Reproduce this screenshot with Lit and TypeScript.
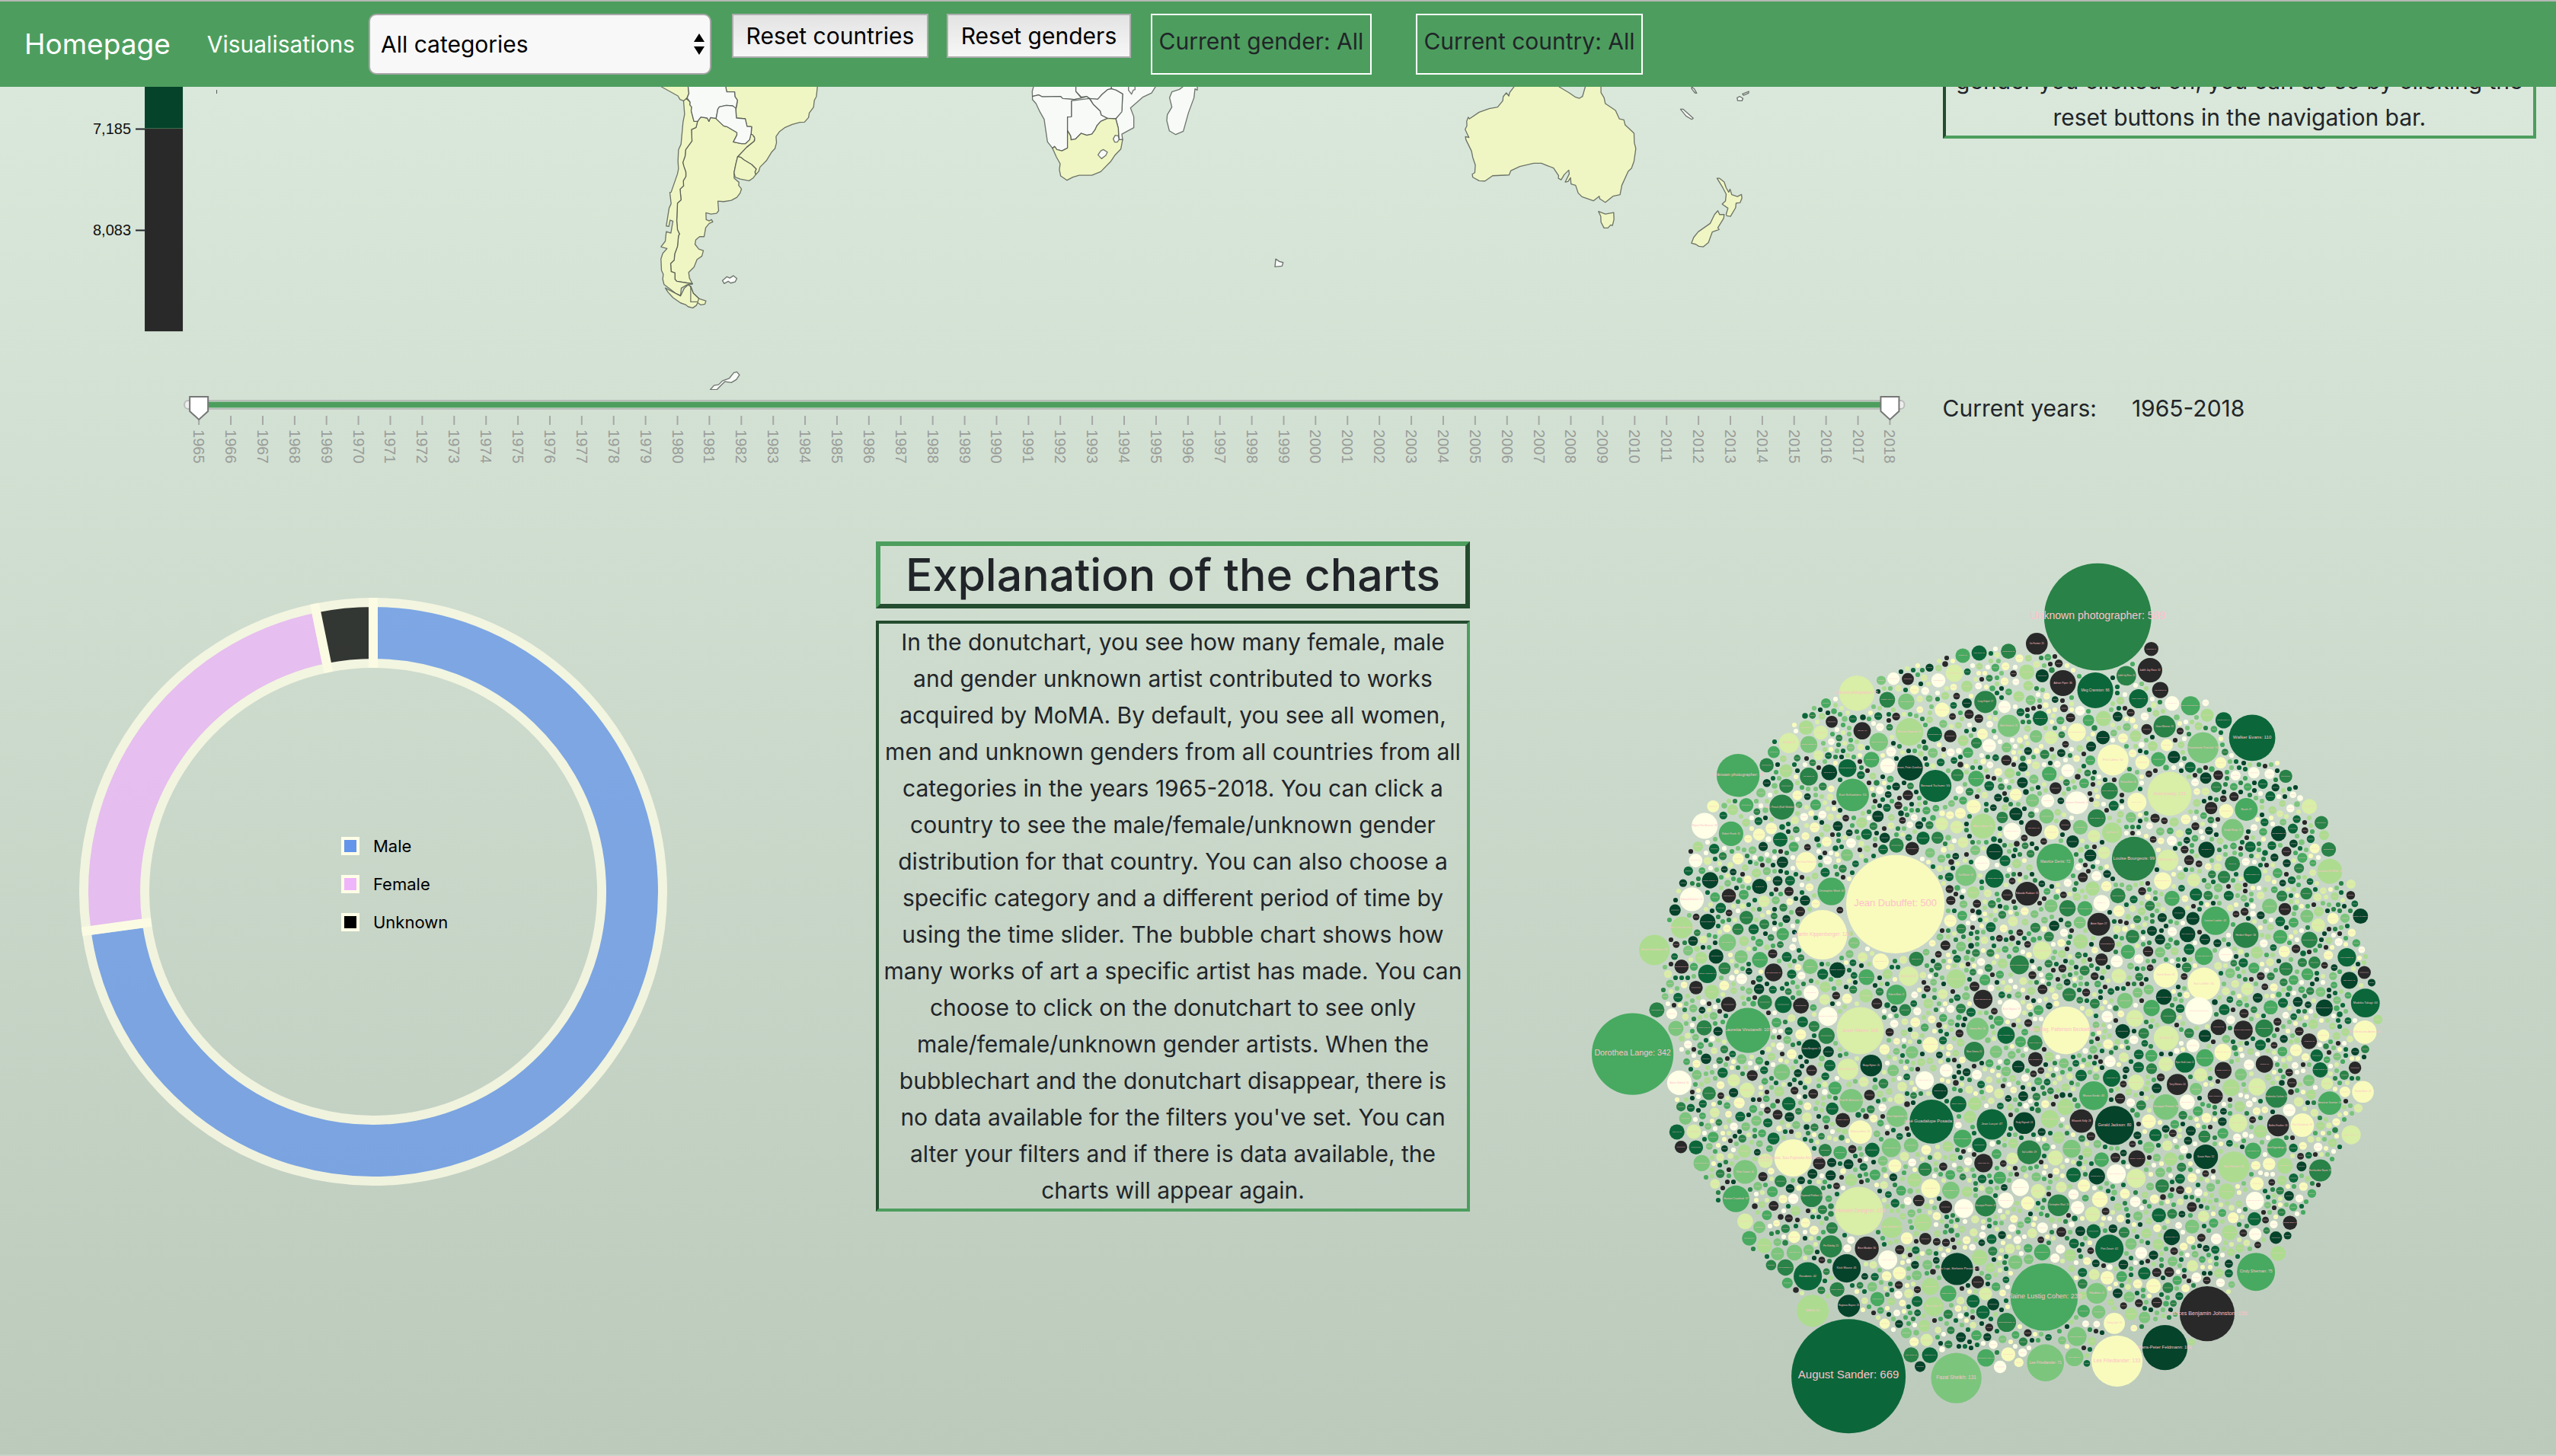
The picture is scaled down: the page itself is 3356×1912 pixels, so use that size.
import { LitElement, html, svg, css } from "lit";
import { customElement, state } from "lit/decorators.js";

const SCALE = ["#fffee6", "#f8fbbc", "#d9eea6", "#addc90", "#7cc57d", "#47aa60", "#298247", "#0b673a", "#05432b", "#292929"];

interface Bubble { x: number; y: number; r: number; c: number; label: string; }

/* The bubble canvas is stored in four tiles; every row is x, y, radius, colour index and optional label. */
const TILES: { ox: number; oy: number; ky: number; rows: string }[] = [
  { ox: 2060, oy: 720, ky: 2.613, rows: `
1200,1224,181,1,Jean Dubuffet: 500|932,1329,91,1,Martin Kippenberger: 128|622,782,79,5,Unknown photographer: 95|1058,500,65,2,Unknown photographer: 65|1043,849,60,5,Kurt Schwitters: 55|1347,818,59,7,Bernard Tschumi: 55|314,1381,56,3,Bruce Davidson: 48|1252,633,51,3,Brenton Hamed: 39|965,1180,51,5,Christopher Wool: 40|783,891,46,6,A. R. Penck (Ralf Winkler): 32|1254,756,47,8,Damson, Peter Zumthor: 34|499,955,48,0,Miguel Rio Branco: 36|596,982,45,5,Robert Frank: 31|452,1207,44,0,Edward Steichen: 31|415,1304,40,3,Henri Cartier-Bresson: 25|872,1080,38,1,West Grand Street: 22|809,671,37,2,Sam Vable: 21|1531,530,41,6,Craig Kalpul: 27|1522,956,46,3,Alison Saxton: 31|1078,629,32,9,Otto Dix: 16|1139,667,34,4,Bernd Lohaus: 18|1240,529,30,4,Arlene Gottfried: 15|1170,522,29,6,Richard Avery: 14|882,676,31,4,Richard Misrach: 15|882,786,33,6,Jim Shaw: 17|1024,757,33,7,Richard Bosman: 16|957,772,29,8,David Salle: 13|1459,1125,39,4,Karl Blaster: 23|582,1355,32,4,Roy Wood: 15|752,1458,33,9,Jan Tschichold: 16|509,1463,34,7,Stanley Tomkins: 17|1204,1534,37,5,Roberto Matta: 21|1249,1471,36,2,Anna Castelli: 20|1423,1480,35,3,Oliver Laric: 18|519,1142,30,8,Michael Schmidt: 14|510,1284,29,8,Giorgio Morandi: 13|987,1450,29,8,Eduardo Chillida: 13|701,1163,28,8,B. Beck: 12|702,1415,29,5,Richard Kelly: 13|1094,1474,29,5,Rogier van der: 13|1146,1421,30,1,Robert Rabin: 14|1277,1412,27,6,Bob Dylan: 11|1519,1083,28,0,Chris Burke: 12|1564,1136,34,7,Ornan Naum: 22|890,1528,28,0,Peter Bliss: 12|940,1551,20,2|1372,557,27,1|1358,456,26,0|1417,431,32,2|1448,371,27,5,Contarino: 11|1508,362,28,7,Mark Cohen: 12|1172,749,28,0|1112,728,29,5|1204,1022,27,6|1262,1033,25,9,Felix Gonzalez: 9|1302,997,24,7|1355,996,22,6|1161,996,19,8|1094,984,20,7|1076,944,20,3|1136,922,21,8|1022,1055,22,4|777,1002,27,7,Aquaman Dustrin: 12|785,1080,21,8|744,964,21,1|699,985,22,1|652,884,26,5|602,900,20,3|530,888,22,1|753,702,22,5|727,747,26,6|872,618,27,3|926,635,26,2|966,598,22,9|945,534,18,5|1148,456,17,4|1193,450,23,0|1246,451,22,9|1344,641,28,7,Sonia Delaunay: 12|1402,647,23,9|1497,793,29,5,Arne Jacobsen: 12|1545,680,25,0|1428,781,23,6|1488,889,26,1|1439,912,20,1|1370,948,24,2|1426,959,24,2|1449,1012,20,2|1463,534,18,8|1471,572,17,9|1507,587,16,9|1463,476,21,3|1270,488,17,1|1449,663,20,3|1467,704,19,5|1498,671,20,6|799,818,26,6|798,766,24,3|840,850,18,1|907,883,20,5|706,842,17,4|534,1034,19,7|474,1026,19,3|466,1074,25,0,Jim Seaweed: 10|439,1110,17,7|622,1068,21,1|714,1026,17,8|588,1195,26,9,Hans Namuth: 10|390,1244,21,8|558,1237,19,7|652,1270,25,6|621,1310,21,6|679,1310,19,7|537,1200,18,5|456,1350,18,8|541,1403,27,8,Agnes Denes: 10|633,1404,24,4|414,1438,26,9,Josef Breitenbach: 11|572,1444,22,6|486,1408,22,3|467,1510,25,9|525,1525,27,3,Stefanus: 11|635,1480,20,0|699,1515,19,8|571,1503,18,1|749,1394,17,9|786,1327,23,5|850,1249,18,9|868,1211,19,8|809,1180,17,9|717,1214,21,2|689,1117,17,3|887,1438,28,4,Constant: 11|933,1464,20,7|819,1464,17,7|942,1115,17,7|907,1222,16,1|942,1508,20,3|1048,1357,21,4|1402,1281,23,1|1404,1211,17,9|1446,1263,18,5|1500,1222,15,9|1486,1184,23,3|1398,1130,16,7|1529,1484,20,5|1491,1506,18,9|1522,1550,35,9,Saul Steinberg: 20|1565,1044,30,8|1092,1538,25,3|1037,1014,18,0|951,1073,16,0|1155,1036,18,7|1246,850,19,9|1545,818,18,7|1442,1308,18,6|587,1568,28,9|720,1560,27,6|788,1568,31,7|853,1572,29,9|1132,1565,20,9|401,1544,17,7` },
  { ox: 2600, oy: 720, ky: 2.613, rows: `
432,238,197,6,Unknown photographer: 589|1000,653,85,7,Walker Evans: 110|696,845,81,2,Alvin Lustig: 101|565,1068,81,6,Louise Bourgeois: 99|276,1080,69,5,Maurice Denis: 72|423,490,66,7,Meg Cranston: 66|488,729,57,1,Phil Collins: 50|819,687,57,4,Rosemarie Trockel: 51|822,1497,60,1,Sol LeWitt: 56|865,1281,52,5,Louise Lawler: 41|1416,1563,53,7,Madoka Takagi: 44|1285,1111,46,3,Constance F. White: 32|976,1330,47,6,Herbert Bayer: 34|682,1468,45,1,Daniel Buren: 31|304,465,48,9,Adrian Piper: 36|624,421,45,9,Judith Joy Ross: 32|173,1188,44,9,Eduardo Paolozzi: 31|436,1293,42,9,Anton Stpan: 27|978,899,42,5,Raush: 27|928,970,41,4,Joseph Beuys: 25|60,1136,42,7,Ornan Noyo: 26|208,330,40,9,Iris Farmer: 25|678,614,41,6,Grace Moreno: 25|105,612,41,4,Mimi Schanck: 25|355,876,42,0,Giovanni Schiaretta: 26|690,1073,39,2,Walter Gropius: 22|485,978,37,3,Jack Kurtz: 21|537,440,36,6,Judith Joy Ross: 20|582,519,35,7,Marie Laurel: 19|773,543,35,5,Robert Mapplethorpe: 19|545,807,36,4,Richard Minor: 20|576,874,35,1,Willis Art: 19|428,929,33,6,Diane Barker: 17|475,835,31,6,Wendy Edwards: 15|355,634,33,1,Mira Sternisburg: 17|117,974,32,0,Lindor Morris: 17|196,963,31,9,Irma Wallen: 15|1001,1123,33,7,Jasha Tuszin: 17|671,1144,32,1,Nicholas Nixon: 16|822,1402,33,5,Aleksei Bruchuk: 17|1348,1406,34,7,Tina Modotti: 18|1357,1485,31,8,Brad Parker: 15|227,1383,34,2,Bernard Leach: 18|144,1432,35,6,Anselm Schwartzman: 19|662,489,30,9,Alba Guthrow: 15|629,348,26,9,Robert Blair: 11|104,356,28,6,Claudia Demo: 12|895,593,30,7,Richard Prince: 14|1123,785,24,6|1254,944,25,6|1281,1036,27,6|1210,889,28,2|1006,773,21,0|1097,981,28,8,John Baldessari: 12|832,1037,30,8,Per Millon: 14|927,1085,28,6,Ray-to: 12|904,904,26,1|849,894,23,9|829,791,21,8|875,781,18,9|655,727,27,5|712,719,23,8|596,737,26,1|634,681,18,3|686,678,22,1|525,654,18,1|451,652,25,8|571,647,21,3|612,624,20,9|505,580,18,8|453,587,28,3,Aaron Siskind: 12|398,593,21,5|367,560,18,0|332,584,17,9|221,586,28,7,Sarah Moon: 12|171,427,28,3|228,440,24,8|89,547,23,0|142,511,20,3|185,524,18,4|205,648,23,4|260,652,25,2|37,679,27,0|254,777,27,5,David Reed: 11|322,765,24,0|277,826,22,9|248,869,24,0|192,868,24,4|131,848,22,1|96,730,19,9|131,914,24,8|244,922,27,4|312,952,21,9|262,977,27,1|340,1009,23,8|368,960,27,4|418,990,23,2|455,1047,23,2|405,1057,22,8|51,1044,26,8,Jerry Sand: 11|91,1075,20,7|134,1085,17,3|81,926,21,6|99,1192,21,9|260,1230,24,4|321,1238,30,6,Edward Ruscha: 14|385,1239,28,5,Willem Gomez: 12|446,1220,30,0,Jim Dine: 14|413,1170,26,3|506,1195,28,6,Robin Forest: 12|510,1247,21,1|464,1162,19,1|366,1287,22,4|369,1352,27,3|466,1361,29,9,Leonard Baskin: 13|446,1414,23,9|502,1420,22,0|543,1387,26,5|560,1335,25,6|510,1470,27,2|583,1412,17,0|617,1386,19,9|661,1389,19,4|661,1345,19,8|706,1318,17,0|730,1254,24,8|782,1273,24,8|762,1327,29,8,Sheri Sherry: 13|826,1345,20,8|768,1379,20,7|903,1397,26,0|759,1441,18,6|705,1204,28,5,Alberto Giu: 12|793,1191,23,7|785,1141,24,2|838,1194,17,6|896,1131,23,6|875,1168,16,4|993,1027,20,7|1072,1023,16,7|1126,1043,18,9|1152,1016,15,8|1093,1117,18,5|1109,1196,20,6|1064,1231,28,4|1120,1241,23,9|1103,1283,18,7|1103,1336,26,5|1199,1187,22,6|1240,1200,15,2|1201,1265,24,4|1243,1296,25,2|1297,1273,21,1|1210,1346,30,6,Lynn Nyhychuk: 14|1398,1265,28,8,Quantum Von Sistas: 12|1362,1193,16,9|1363,1155,17,2|1412,1458,24,9|1439,1493,14,8|1124,1446,25,6|1118,1386,21,1|1161,1377,16,9|1017,1390,22,3|1006,1443,20,5|967,1425,17,7|1184,1424,17,6|1229,1424,22,6|1203,1464,22,5|1251,1525,18,4|982,1515,23,2|1152,1484,18,5|1020,1545,18,8|675,1542,29,8,Frank Westland: 13|327,1534,25,6|229,1516,18,9|17,1484,20,5|804,1590,50,0|532,1555,29,4|630,1580,30,5|1280,1399,17,1|1341,1272,17,4|272,1298,19,8|669,1270,17,8|713,942,17,3|662,974,15,4|643,929,17,9|554,926,19,4|868,822,20,6|933,855,17,9|932,821,14,5|884,739,21,1|834,575,24,3|705,535,27,0,Alice Eden: 11|772,754,20,7|790,806,14,0|735,630,13,9|640,680,18,3|8,640,20,1|237,710,17,6|298,705,15,8|157,753,17,8|155,807,20,8|108,774,19,3|382,809,18,5|345,828,17,8|405,730,18,5|197,795,17,4` },
  { ox: 2060, oy: 1310, ky: 2.605, rows: `
1028,1298,210,7,August Sander: 669|234,196,150,5,Dorothea Lange: 342|1424,1304,93,4,Fazal Sheikh: 131|658,115,83,5,Lauretta Vinciarelli: 107|1071,116,87,2,Josef Albers: 116|1066,733,89,2,Unknown Designer: 123|1333,427,81,7,José Guadalupe Posada: 99|824,551,69,1,Sou Fujimoto, Sou Fujimoto Architects: 73|896,1074,59,3,NASA: 52|1427,931,59,8,Giorgia Lupi, Stefanie Posavec: 54|1021,929,52,8,Kiick Mause: 41|878,956,52,7,Residents: 42|614,691,49,5,Hastan Crawford: 37|648,599,44,4,Peter Downs: 30|1095,861,44,9,Brice Marden: 30|1038,355,43,4,Fred W. McDarrah: 28|1071,463,43,1,Rebecca Horn: 28|1029,1057,41,8,Hagiwara Bayuro: 26|892,682,40,6,Raymond Pettibon: 24|963,854,41,6,Per Kirkeby: 25|406,294,45,0,Aaron Siskind: 31|1555,436,56,7,Jean Lurçat: 47|1502,110,41,4,Ximena Fair: 24|1111,235,40,8,Margo Hytner: 25|1206,409,39,4,Meret Oppenheim: 22|1025,248,39,2,Paul Graham: 22|1187,789,39,3,Isaac Lokshamin: 22|1532,715,39,6,Giuseppe Penone: 22|1490,188,37,6,Maria Ximena: 21|891,178,36,8,Louise Bourgeois: 20|952,67,35,0,Thomas Kaufmann: 18|1341,1060,36,3,Marcus Quinn: 20|1172,900,35,0,Hyena Hub: 18|1185,516,35,4,Philip Guston: 18|1524,569,34,9,Joan Miro: 18|1308,286,34,0,Matt Mangal: 17|1330,656,35,1,Gilbreath: 18|1452,724,35,0,Peter Barrios: 18|1533,1235,32,5,Giacometti Harris: 16|1404,662,32,4,Shelly Saporo: 16|1447,485,33,5,Richard McCaslin: 16|1301,772,32,3|783,258,30,4|947,133,30,6|323,45,28,6,Vitus Sebaste: 12|393,108,28,4|378,58,20,0|497,106,28,6,Michael Keller: 12|586,28,27,9,Karl Breiner: 11|720,18,27,6|788,27,31,7|854,35,29,9|515,330,25,6|606,286,23,2|655,319,28,2|674,269,20,9|565,260,19,7|626,363,20,1|536,396,18,2|428,416,23,4|397,462,28,7,Dave Gill: 12|459,461,27,2|412,514,23,9|467,515,26,7|530,480,20,5|488,569,30,4,Barbara Mensch: 14|556,605,16,6|537,640,18,2|645,528,24,3|722,561,27,2|752,485,22,7|689,424,19,4|731,431,17,7|650,444,16,4|808,366,25,7|811,411,18,8|892,252,20,9|898,332,18,9|978,312,24,5|968,383,23,7|1007,422,27,9,William Leavitt: 11|959,235,21,7|954,188,20,8|901,101,20,6|859,86,20,7|852,129,20,1|763,88,18,5|1105,336,20,9|1215,349,20,2|1225,307,18,2|1156,297,18,6|1192,252,21,4|1261,190,23,4|1329,164,29,1,Danielle Rhoads: 13|1387,252,24,0|1364,323,29,8,Madame Nini: 13|1431,367,30,7,Isabelle Corbin: 14|1492,366,25,3|1474,411,23,3|1509,507,27,7|1393,512,20,3|1258,508,27,4|1115,524,27,7|1042,521,15,9|997,533,25,5|942,525,24,6|920,570,23,9|966,567,17,8|962,611,19,8|1037,627,22,3|1125,609,20,5|1198,578,24,1|1270,627,26,3|1309,590,25,6|1402,609,18,5|1286,697,21,9|1385,719,24,9|1464,667,20,3|1519,623,16,7|1233,546,17,2|1199,706,16,7|1242,826,22,1|1310,828,22,9|1352,838,14,9|1352,750,15,1|1119,917,14,2|967,791,21,6|932,728,17,6|825,691,19,0|787,692,16,1|833,732,18,3|869,773,18,1|828,822,22,1|901,799,17,1|796,793,16,6|829,875,29,4,Karl Rainer: 12|881,866,19,4|767,879,24,4|796,926,30,6,Lee Friedlander: 14|743,918,19,6|803,979,20,5|718,851,28,3|663,826,27,5|648,768,29,2,David Wilson: 12|700,788,22,4|778,631,22,6|748,667,20,5|694,648,16,4|813,656,16,8|854,628,14,8|713,615,17,9|986,1001,27,6,Merlina Anderse: 11|928,1004,14,6|1134,1034,26,5|1115,992,18,4|1168,955,18,1|1215,945,24,1|1329,991,32,3|1281,1002,13,9|1394,1015,30,5,Shadai Kanker: 13|1280,1042,20,7|1249,1015,17,2|1211,1019,15,0|1306,1126,22,3|1240,1150,20,4|1315,1174,23,2|1269,1180,17,1|1161,1118,19,1|1258,1225,28,6,Gran Weaver: 12|1327,1226,29,7,Sarah Moon: 13|1291,1265,20,8|1486,1041,24,7|1522,1079,25,7|1532,1016,24,2|1503,976,23,9|1510,892,29,3|1394,1086,17,6|1404,1141,14,6|1498,1158,19,5|1216,865,17,9|1275,867,14,7|1519,12,36,9,Saul Steinberg: 20|1236,45,22,6|1132,26,20,9|1196,92,15,0|1160,180,19,1|1179,121,15,9|1204,0,37,5|470,267,18,4|412,376,17,6|1376,581,15,9|1560,1052,22,8|1037,832,14,0|1092,0,28,3|605,328,17,8|504,212,19,8|548,118,17,8|1441,40,18,6|1478,53,17,7|1515,300,14,7|1468,563,15,0|1554,829,18,7` },
  { ox: 2600, oy: 1310, ky: 2.605, rows: `
235,1027,124,5,Elaine Lustig Cohen: 235|834,1084,101,9,Frances Benjamin Johnston: 156|503,1246,94,1,Lee Friedlander: 133|679,1200,83,8,Hans-Peter Feldmann: 102|315,115,88,1,Alex Bag, Patterson Beckwith: 117|240,1252,68,4,Lee Friedlander: 71|494,440,72,8,Gerald Jackson: 80|1014,941,70,5,Cindy Sherman: 75|417,338,53,5,Masuo Ikeda: 43|475,862,52,7,Piet Zwart: 42|932,582,57,3,Raj Pinsoli: 49|804,62,49,0,Marcel Jean: 37|684,141,46,2,Jim Dow: 33|682,377,47,4,Giuseppe Penone: 33|829,547,45,8,Susan Hara: 32|180,532,44,6,Sol LeWitt: 29|372,425,43,9,Ellsworth Kelly: 28|162,432,40,8,Rudy Rigoudt: 24|288,713,40,6,Christopher Wool: 25|1184,439,43,1,Paul Goudzack: 28|1285,364,43,5,American Screetor: 28|1414,121,43,1,Helio Montezuma Atomica: 28|1407,325,40,1,Natalia Barin: 24|1250,594,41,6,Bernhardine Naum: 25|1089,342,40,6,Fredericka Carlson: 24|1095,440,40,9,Barbra Kruzkov: 24|725,300,39,9,Terry Winters: 24|493,1117,39,1,Danny Lyon: 24|428,1014,38,4,Philip Adams: 22|753,225,37,7,Eyon Verdi Lewis: 21|97,1114,35,6,Thios Nakomiak: 19|356,1162,35,4,Howard Kottler: 19|704,822,30,8,Blocked Ruby: 14|657,747,26,7|346,1233,33,4,Gary Burgs: 17|1364,472,35,2,Bruce Naugh: 19|967,114,35,9,Clarence Blackledge: 19|1044,108,33,6|876,104,29,9,Luis Peron: 12|1045,230,32,9,Wilfried: 16|115,42,36,0,Alexia Niagrous: 19|95,131,32,7,Dee McCarthy: 16|500,606,35,0,John Robinson: 18|573,621,35,2,Edward Ruben: 18|429,614,30,8,Richard Dube: 13|576,554,31,9,Camille Horvitz: 14|483,278,32,7,Angus Gold: 16|1091,517,36,5,Martin Kippenberger: 20|1003,527,30,5,Maki Sakjaku: 13|1010,698,33,0,Katharina Perez: 16|906,666,30,3|948,432,34,2,Georg Karsly: 17|922,311,31,3|1018,308,32,2|893,252,31,9,Yamako Flower: 14|864,340,28,9,Yoshio Honjorian: 12|793,316,23,4|761,360,28,0,Samuele Ennio: 12|810,267,25,2|826,209,32,5,Robert Trauner: 15|892,190,31,1,Catherine Opie: 14|682,230,27,2|629,45,31,5,Michael Blacker: 14|692,66,29,6|568,74,31,2|532,22,29,4|601,125,20,6|524,118,27,8|467,68,21,0|826,134,23,8|782,167,24,0|897,44,20,7|970,57,17,9|735,40,16,7|768,124,18,6|1068,36,26,5|1209,152,29,9,Arlit Bruyen: 13|1265,38,31,8,Hannah Thommay: 14|1261,132,22,1|1237,201,23,7|1250,250,28,7,Christin Sebesky: 12|1378,243,23,9|1338,268,17,6|1161,183,22,1|1111,187,18,5|1030,165,20,7|1146,294,18,9|1136,259,14,9|1208,286,21,4|1275,297,22,2|1171,359,18,2|1136,388,23,0|1341,325,20,1|1390,381,16,2|958,266,22,4|988,232,19,0|1462,78,17,3|1295,500,16,3|1242,514,16,0|1251,441,16,3|1151,517,16,7|1062,572,23,1|1120,578,29,3,Frank Hays: 12|1013,577,17,1|1109,628,18,3|1152,620,17,7|1017,639,25,1|1135,681,18,8|1188,649,16,1|1219,673,16,5|1139,773,26,9,Mirrisham Banker: 11|1087,824,23,8|1130,817,14,8|1095,878,28,3,Rob Warner: 12|1008,760,25,7|1011,812,23,0|930,756,20,1|917,806,28,3,Antonio Leone: 12|967,808,14,9|954,860,16,3|868,828,20,0|821,751,21,2|858,774,17,5|779,786,26,4|813,824,15,9|774,832,16,1|654,847,20,3|592,876,22,0|554,845,21,4|529,806,20,6|488,793,16,8|417,802,26,7|413,744,28,2|440,693,29,1,Alexandra Fletcher: 12|461,734,14,9|358,721,25,0|343,676,19,0|381,646,23,1|343,609,27,7|298,651,20,2|213,665,27,2|175,706,25,1|147,652,32,0,Slava Kumar: 16|94,696,29,0,Harrington Balk: 13|229,790,20,0|228,874,30,5,Kurt Schwitters: 14|331,884,22,3|295,863,17,0|275,894,17,0|176,860,16,5|178,898,18,4|129,908,26,4|46,870,17,6|37,829,20,7|37,927,18,3|55,1053,22,8|19,1017,24,2|14,1080,20,7|9,890,27,3|58,992,16,5|48,1190,16,0|103,1223,26,1|73,1266,23,0|158,1180,16,6|156,1217,16,0|142,1251,17,1|22,1235,31,5|130,1157,14,5|175,1150,14,9|118,553,22,2|72,619,23,5|60,538,18,5|276,551,28,2,Josef Sudek: 12|336,520,33,4,Wolfgang Wildrier: 16|288,482,22,3|256,418,33,3,Thomas Joachim: 16|313,377,30,3|206,616,17,4|201,157,28,6,Minor Weetjin: 12|203,214,27,9,Ellery Normandy: 11|140,239,23,8|58,188,23,4|95,255,18,4|148,154,20,5|254,205,18,3|477,221,21,0|371,269,21,7|573,293,29,2,Zoe Leonard: 12|582,241,20,7|630,246,20,6|629,202,22,5|583,197,18,7|514,348,19,9|553,362,16,0|565,147,16,0|620,426,26,1|644,473,23,7|620,515,21,4|688,509,19,2|700,555,25,3|708,467,14,9|682,452,14,8|715,436,16,5|745,405,16,6|749,522,15,0|740,583,17,6|662,601,18,4|669,647,25,6|735,661,15,9|779,619,17,1|847,652,16,4|570,701,20,0|641,692,17,1|580,750,17,4|446,557,27,5|497,550,18,9|407,477,16,9|467,961,25,1|419,950,20,2|526,916,18,8|520,957,20,5|603,946,23,7|649,943,17,9|579,982,17,1|637,989,27,1|690,995,20,6|649,1046,20,9|604,1097,21,4|554,1085,23,3|548,1027,20,4|505,1014,18,8|435,1078,25,4|380,1075,23,5|376,1022,15,3|376,982,18,6|376,943,17,7|425,912,14,8|411,1178,16,3|301,1175,15,4|527,1057,13,9|795,960,18,0|833,970,14,9|755,997,15,1|724,970,17,5|780,920,21,2|877,945,17,3|883,978,16,0|914,913,15,8|914,946,15,7|864,865,15,7|707,905,18,4|713,870,14,9|637,884,17,8|777,1181,13,3|892,467,20,5|890,427,16,8|824,478,22,6|1030,460,24,3|954,375,20,3|764,492,15,8|904,144,15,4|921,79,16,0|1173,118,16,9|1415,179,15,6|392,1254,12,7|251,1165,12,7` },
];

const EDGE: [number, number][] = [
  [2596, 850], [2563, 862], [2524, 873], [2471, 888], [2440, 905], [2392, 919], [2356, 953], [2324, 980], [2310, 1003], [2300, 1045], [2274, 1049], [2239, 1070], [2221, 1106],
  [2214, 1133], [2210, 1152], [2192, 1194], [2190, 1240], [2183, 1279], [2181, 1310], [2196, 1348], [2212, 1398], [2199, 1441], [2203, 1479], [2231, 1533], [2253, 1575],
  [2278, 1598], [2289, 1629], [2317, 1655], [2342, 1682], [2366, 1702], [2399, 1705], [2453, 1725], [2464, 1740], [2499, 1759], [2535, 1771], [2571, 1776], [2596, 1771],
  [2620, 1790], [2660, 1794], [2671, 1767], [2714, 1771], [2739, 1794], [2750, 1755], [2814, 1744], [2857, 1730], [2870, 1690], [2932, 1698], [2939, 1648], [2957, 1640],
  [3007, 1625], [3021, 1598], [3039, 1575], [3046, 1556], [3061, 1525], [3079, 1506], [3075, 1479], [3100, 1455], [3100, 1410], [3107, 1375], [3118, 1290], [3111, 1263],
  [3100, 1237], [3089, 1214], [3096, 1191], [3090, 1165], [3075, 1156], [3061, 1110], [3054, 1076], [3025, 1053], [3011, 1022], [2989, 999], [2936, 999], [2921, 965],
  [2896, 923], [2829, 911], [2800, 870], [2720, 866], [2682, 860],
];

function inside(x: number, y: number): boolean {
  let hit = false;
  for (let i = 0, j = EDGE.length - 1; i < EDGE.length; j = i++) {
    const [xi, yi] = EDGE[i];
    const [xj, yj] = EDGE[j];
    if (yi > y !== yj > y && x < ((xj - xi) * (y - yi)) / (yj - yi) + xi) hit = !hit;
  }
  return hit;
}

/* Named artists keep their place; artists with only a few works fill the space between them. */
function pack(): Bubble[] {
  const all: Bubble[] = [];
  const cell = 16;
  const grid = new Map<number, Bubble[]>();
  const add = (b: Bubble) => {
    all.push(b);
    for (let gx = Math.floor((b.x - b.r) / cell); gx <= Math.floor((b.x + b.r) / cell); gx++)
      for (let gy = Math.floor((b.y - b.r) / cell); gy <= Math.floor((b.y + b.r) / cell); gy++) {
        const k = gx * 1000 + gy;
        const list = grid.get(k);
        if (list) list.push(b);
        else grid.set(k, [b]);
      }
  };
  const free = (x: number, y: number, r: number, gap: number) => {
    const reach = r + gap;
    for (let gx = Math.floor((x - reach) / cell); gx <= Math.floor((x + reach) / cell); gx++)
      for (let gy = Math.floor((y - reach) / cell); gy <= Math.floor((y + reach) / cell); gy++)
        for (const b of grid.get(gx * 1000 + gy) ?? []) {
          const d = reach + b.r;
          if ((b.x - x) ** 2 + (b.y - y) ** 2 < d * d) return false;
        }
    return true;
  };
  for (const t of TILES)
    for (const row of t.rows.trim().split("|")) {
      const [x, y, r, c, ...rest] = row.split(",");
      const b = { x: t.ox + +x / 2.8, y: t.oy + +y / t.ky, r: +r / 2.8, c: +c, label: rest.join(",") };
      if (free(b.x, b.y, b.r * 0.7, 0)) add(b);
    }
  let seed = 41;
  const rnd = () => {
    seed = (seed + 0x6d2b79f5) | 0;
    let t = Math.imul(seed ^ (seed >>> 15), 1 | seed);
    t = (t + Math.imul(t ^ (t >>> 7), 61 | t)) ^ t;
    return ((t ^ (t >>> 14)) >>> 0) / 4294967296;
  };
  for (const [r, tries] of [[6.5, 900], [5.2, 3000], [4.4, 6000]])
    for (let i = 0; i < tries; i++) {
      const x = 2180 + rnd() * 940;
      const y = 845 + rnd() * 960;
      if (inside(x, y) && free(x, y, r, 1.3)) add({ x, y, r, c: Math.floor(rnd() * 10), label: "" });
    }
  const spots: [number, number, number][] = [];
  for (let x = 2180; x < 3120; x += 2)
    for (let y = 845; y < 1805; y += 2) spots.push([x, y, (x - 2640) ** 2 + (y - 1320) ** 2]);
  spots.sort((a, b) => a[2] - b[2]);
  for (const [x, y] of spots) {
    const r = rnd() < 0.2 ? 3.8 : 3.1;
    if (free(x, y, r, 1.3) && inside(x, y)) add({ x, y, r, c: Math.floor(rnd() * 10), label: "" });
  }
  return all;
}

const BUBBLES = pack();

const Y = "y", W = "w";
const MAP: { ox: number; oy: number; lands: [string, string][] }[] = [
  { ox: 830, oy: 100, lands: [
    [Y, "368,0 368,42 372,62 403,62 404,80 414,95 412,113 408,130 410,165 445,168 452,198 470,199 468,230 480,238 482,253 450,280 415,317 428,320 440,330 470,348 488,366 483,378 486,388 498,375 503,358 528,333 548,300 562,285 568,262 566,238 580,218 600,203 630,190 660,182 678,181 694,163 697,145 714,122 717,95 725,80 729,42 732,0"],
    [Y, "50,0 115,42 180,78 188,92 204,98 212,92 216,84 223,68 220,42 220,0"],
    [Y, "257,178 270,161 295,165 302,178 308,163 330,166 360,196 375,200 412,222 412,232 398,259 430,266 445,266 462,250 466,230 473,230 482,243 480,256 450,280 415,317 407,350 401,380 401,402 420,418 419,430 430,444 425,460 412,477 390,489 360,494 337,492 340,530 332,540 310,543 290,538 291,565 303,570 312,565 317,574 303,580 289,597 283,632 265,632 250,645 247,662 262,681 280,687 274,709 255,722 243,752 222,773 225,795 237,818 175,808 168,800 168,775 153,770 151,738 165,724 167,700 178,670 182,628 186,622 178,605 175,570 178,500 192,487 188,445 202,432 201,412 211,395 211,378 203,355 199,340 208,315 210,290 235,255 233,210 251,202"],
    [Y, "202,98 212,88 228,102 227,113 234,122 232,136 243,178 257,178 251,202 233,210 235,255 210,290 208,315 199,340 203,355 211,378 211,395 201,412 202,432 188,445 192,487 178,500 175,570 178,605 186,622 182,628 178,670 167,700 165,724 151,738 153,770 168,775 168,800 175,808 237,818 215,822 193,835 190,864 170,855 125,820 120,800 122,780 115,765 113,720 120,698 137,679 113,672 130,650 134,612 152,618 160,571 149,567 144,592 134,590 145,520 153,502 148,458 153,457 178,385 182,365 180,335 182,290 192,268 200,180 206,150"],
    [Y, "130,834 190,866 205,835 220,822 230,828 240,855 262,876 290,885 286,898 270,901 258,892 252,903 238,913 220,908 210,900 190,893 160,872 140,850"],
    [Y, "230,828 230,889 258,889 262,876 240,855"],
    [Y, "415,317 428,320 440,330 470,348 488,366 483,378 486,388 475,402 460,412 425,405 405,398 401,380 407,350"],
    [W, "220,0 220,42 223,68 216,86 228,102 227,113 234,122 232,136 243,178 257,178 270,161 295,165 302,178 308,163 330,166 337,130 343,121 370,115 395,117 408,128 414,95 404,80 403,62 372,62 368,42 368,0"],
    [W, "330,168 337,130 343,121 370,115 395,117 407,125 410,165 445,168 452,198 470,199 468,225 462,250 445,266 430,266 398,259 412,232 412,222 375,200 360,196"],
    [W, "355,805 372,790 384,795 398,786 412,797 405,810 388,815 378,808 362,817"],
    [W, "307,1235 322,1218 340,1215 355,1200 382,1190 400,1168 412,1165 422,1177 410,1195 390,1207 365,1203 345,1222 333,1235"],
  ] },
  { ox: 1330, oy: 100, lands: [
    [W, "76,80 75,60 80,42 80,0 247,0 247,60 262,78 270,88 240,92 195,88 187,80 115,82 100,74"],
    [W, "247,0 247,60 268,82 290,80 300,88 333,91 350,72 372,53 387,50 387,0"],
    [W, "387,0 565,0 560,42 545,66 510,83 462,125 475,160 475,203 428,228 431,250 416,250 414,205 404,168 428,135 431,70 405,55 387,50"],
    [W, "456,0 454,55 466,71 473,55 480,53 478,0"],
    [W, "76,80 100,74 115,81 187,80 195,88 240,92 270,86 290,80 300,88 275,96 230,97 230,160 214,161 214,283 192,294 172,289 163,277 155,284 135,258 122,170 105,140 90,108 76,92"],
    [W, "230,97 270,92 300,88 315,110 343,137 347,153 372,166 345,178 330,195 322,212 310,228 290,233 268,225 245,248 228,251 226,235 214,215 214,161 230,160"],
    [W, "302,88 333,91 350,72 372,53 387,50 405,55 431,70 428,140 404,168 372,166 347,153 343,137 315,110"],
    [Y, "155,284 163,277 172,289 192,294 214,283 214,215 226,235 228,251 245,248 268,225 290,233 310,228 322,212 330,195 345,178 372,166 404,168 414,205 416,250 431,250 424,287 400,312 385,335 345,376 310,390 260,390 235,398 212,410 187,393 182,368 185,345 170,318"],
    [W, "394,247 402,233 414,235 417,250 410,260 400,260"],
    [W, "334,310 345,294 355,289 371,299 365,312 348,325"],
    [W, "668,0 668,42 655,52 625,62 616,85 625,122 607,152 605,175 615,215 640,230 670,217 690,145 712,85 716,50 725,55 726,0"],
    [W, "1034,720 1048,730 1063,734 1059,748 1031,751"],
  ] },
  { ox: 1880, oy: 100, lands: [
    [Y, "330,0 322,42 305,65 302,78 292,66 280,80 278,97 258,122 225,128 185,142 147,168 142,162 136,178 137,195 130,210 145,242 131,238 133,250 155,295 160,320 170,350 168,380 158,386 160,398 185,412 208,413 238,392 303,389 310,372 345,356 400,343 430,343 478,362 498,392 497,402 508,408 520,388 538,370 540,385 524,417 535,415 545,400 547,425 565,430 575,460 590,475 635,491 658,473 660,483 682,497 712,473 740,467 747,430 772,375 785,363 795,335 802,285 796,262 795,225 760,192 755,172 737,168 722,135 682,108 677,85 665,65 664,0 604,0 603,42 592,80 580,87 565,83 540,66 500,42 500,0"],
    [Y, "655,533 682,543 715,537 716,565 710,588 703,586 692,598 677,598 665,575 664,552"],
    [Y, "1122,402 1131,402 1150,417 1158,440 1168,457 1173,445 1180,467 1202,474 1218,466 1220,480 1213,498 1197,500 1195,518 1175,552 1160,550 1158,543 1165,520 1142,504 1155,492 1158,465 1145,440"],
    [Y, "1112,545 1125,530 1132,545 1150,545 1148,560 1125,597 1130,604 1103,614 1088,655 1068,672 1050,670 1038,662 1021,658 1030,635 1048,613 1095,580"],
    [W, "978,130 988,130 1028,166 1022,170 1000,157"],
    [W, "1201,85 1212,80 1224,88 1220,97 1203,96"],
    [W, "1222,70 1247,60 1246,67 1226,75"],
    [W, "1022,42 1032,50 1042,67 1035,66 1022,50"],
  ] },
];

function arc(a0: number, a1: number, ro: number, ri: number): string {
  const p = (a: number, r: number) => `${(490 + r * Math.sin(a)).toFixed(1)} ${(1172 - r * Math.cos(a)).toFixed(1)}`;
  const s = (a0 * Math.PI) / 180;
  const e = (a1 * Math.PI) / 180;
  const big = a1 - a0 > 180 ? 1 : 0;
  return `M${p(s, ro)}A${ro} ${ro} 0 ${big} 1 ${p(e, ro)}L${p(e, ri)}A${ri} ${ri} 0 ${big} 0 ${p(s, ri)}Z`;
}

const GENDERS = [
  { name: "Male", color: "#6395eb", from: 0, to: 262.2 },
  { name: "Female", color: "#efb5fb", from: 262.2, to: 348.5 },
  { name: "Unknown", color: "#000000", from: 348.5, to: 360 },
];

@customElement("nav-bar")
export class NavBar extends LitElement {
  static styles = css`
    .bar { box-sizing: border-box; display: flex; align-items: flex-start; height: 114px; padding: 16px 32px; border-top: 2px solid #b5b8b5; background: #4d9e5e; font: 30px/48px Inter, sans-serif; color: #212529; }
    .brand, .link { line-height: 80px; color: #fff; text-decoration: none; }
    .brand { font-size: 37px; margin-right: 48px; }
    .link { margin-right: 18px; }
    .pick { position: relative; width: 450px; margin-right: 27px; }
    .select { box-sizing: border-box; width: 100%; height: 80px; padding: 0 14px; appearance: none; border: 2px solid #a6a6a6; border-radius: 10px; background: #f8f8f8; color: #000; font: inherit; }
    .arrows { position: absolute; right: 8px; top: 26px; width: 16px; height: 28px; pointer-events: none; }
    .btn { box-sizing: border-box; height: 58px; margin-right: 24px; padding: 0; border: 2px solid #adadad; background: linear-gradient(#e3e3e3, #f7f7f7); color: #000; font: inherit; line-height: 54px; }
    .countries { width: 258px; }
    .genders { width: 242px; margin-right: 26px; }
    .now { box-sizing: border-box; height: 80px; padding-top: 10px; border: 2px solid #fff; text-align: center; white-space: nowrap; }
    .gender { width: 290px; margin-right: 58px; }
    .country { width: 298px; }
  `;
  render() {
    return html`<nav class="bar">
      <a class="brand" href="#home">Homepage</a>
      <a class="link" href="#visualisations">Visualisations</a>
      <div class="pick">
        <select class="select" aria-label="Category"><option>All categories</option></select>
        <svg class="arrows" viewBox="0 0 16 28" aria-hidden="true"><path d="M8 0L15 11H1ZM8 28L15 17H1Z" /></svg>
      </div>
      <button class="btn countries" type="button">Reset countries</button>
      <button class="btn genders" type="button">Reset genders</button>
      <div class="now gender">Current gender: All</div>
      <div class="now country">Current country: All</div>
    </nav>`;
  }
}

@customElement("world-map")
export class WorldMap extends LitElement {
  static styles = css`
    :host { display: block; }
    .map { display: block; width: 100%; }
    .land { stroke: #444b44; stroke-width: 4; stroke-opacity: 0.75; stroke-linejoin: round; }
    .y { fill: #f0f6c3; }
    .w { fill: #f8faf8; }
    .tick { stroke: #212529; stroke-width: 2; }
    .num { font: 20px "Liberation Sans", sans-serif; fill: #111; text-anchor: end; }
  `;
  render() {
    return html`<svg class="map" viewBox="0 0 2550 512" role="img" aria-label="World map">
      <rect x="190" y="0" width="50" height="169" fill="#05432b" />
      <rect x="190" y="169" width="50" height="266" fill="#292929" />
      <path d="M190 168.500H240" stroke="#3f6b4c" />
      <path class="tick" d="M178 169.500H190M178 302.500H190" />
      <text class="num" x="172" y="176">7,185</text>
      <text class="num" x="172" y="309">8,083</text>
      <path d="M284.500 118V123" stroke="#555" />
      ${MAP.map((m) => svg`<g transform="translate(${m.ox} ${m.oy}) scale(0.33333)">
        ${m.lands.map(([k, pts]) => svg`<polygon class="land ${k}" points=${pts} />`)}
      </g>`)}
    </svg>`;
  }
}

@customElement("year-slider")
export class YearSlider extends LitElement {
  static styles = css`
    :host { display: block; position: relative; }
    .draw { display: block; width: 100%; }
    .mark { stroke: #a6a8a6; stroke-width: 2; }
    .year { font: 20px "Liberation Sans", sans-serif; fill: #999c99; }
    .range { position: absolute; top: 8px; left: 9.6%; width: 88.2%; height: 34px; margin: 0; opacity: 0; pointer-events: none; }
    .range::-webkit-slider-thumb { pointer-events: auto; }
  `;
  @state() from = 1965;
  @state() to = 2018;
  private at(year: number) { return 261 + ((year - 1965) * 2220) / 53; }
  private thumb(year: number) {
    const x = this.at(year);
    return svg`<path d="M${x - 12} 9H${x + 12}V28L${x} 39L${x - 12} 28Z" fill="#fff" stroke="#777" stroke-width="2" />`;
  }
  render() {
    const years = Array.from({ length: 54 }, (_, i) => 1965 + i);
    return html`<svg class="draw" viewBox="0 0 2550 128">
        <rect x="242" y="14" width="2258" height="11" rx="5" fill="#eee" stroke="#b9bdb9" stroke-width="2" />
        <path d=${`M${this.at(this.from)} 19.500H${this.at(this.to)}`} stroke="#4d9e5e" stroke-width="8" />
        ${years.map((y) => svg`<path class="mark" d="M${this.at(y).toFixed(1)} 34V46" />
          <text class="year" transform="translate(${this.at(y).toFixed(1)} 52) rotate(90)" y="7">${y}</text>`)}
        ${this.thumb(this.from)}${this.thumb(this.to)}
      </svg>
      <input class="range" type="range" min="1965" max="2018" .value=${String(this.from)} aria-label="First year"
        @input=${(e: Event) => { this.from = +(e.target as HTMLInputElement).value; }} />
      <input class="range" type="range" min="1965" max="2018" .value=${String(this.to)} aria-label="Last year"
        @input=${(e: Event) => { this.to = +(e.target as HTMLInputElement).value; }} />`;
  }
}

@customElement("donut-chart")
export class DonutChart extends LitElement {
  static styles = css`
    :host { display: block; }
    .chart { display: block; width: 100%; }
    .slice { stroke: #fffee6; stroke-width: 12; opacity: 0.75; }
    .key { stroke: #fffee6; stroke-width: 4; }
    .name { font: 22px Inter, sans-serif; fill: #000; }
  `;
  render() {
    return html`<svg class="chart" viewBox="0 700 1150 1200" role="img" aria-label="Artists by gender">
      ${GENDERS.map((g) => svg`<path class="slice" d=${arc(g.from, g.to, 380, 300)} fill=${g.color} />`)}
      ${GENDERS.map((g, i) => svg`<rect class="key" x="450" y=${1102 + i * 50} width="20" height="20" fill=${g.color} />
        <text class="name" x="490" y=${1120 + i * 50}>${g.name}</text>`)}
    </svg>`;
  }
}

@customElement("bubble-chart")
export class BubbleChart extends LitElement {
  static styles = css`
    :host { display: block; }
    .chart { display: block; width: 100%; }
    .label { font-family: "Liberation Sans", sans-serif; fill: #ffc0cb; text-anchor: middle; }
    .hint { stroke: #ffc0cb; stroke-opacity: 0.4; stroke-width: 1; }
  `;
  render() {
    return html`<svg class="chart" viewBox="1930 700 1426 1200" role="img" aria-label="Works per artist">
      ${BUBBLES.map((b) => svg`<circle cx=${b.x.toFixed(1)} cy=${b.y.toFixed(1)} r=${b.r.toFixed(1)} fill=${SCALE[b.c]} />`)}
      ${BUBBLES.filter((b) => !b.label && b.r > 4.2).map((b) => svg`<path class="hint" d="M${(b.x - b.r * 0.7).toFixed(1)} ${b.y.toFixed(1)}h${(b.r * 1.4).toFixed(1)}" />`)}
      ${BUBBLES.filter((b) => b.label).map((b) => svg`<text class="label" x=${b.x.toFixed(1)} y=${(b.y + b.r * 0.04).toFixed(1)} font-size=${(b.r / 5).toFixed(1)}>${b.label}</text>`)}
    </svg>`;
  }
}

@customElement("app-root")
export class AppRoot extends LitElement {
  static styles = css`
    :host { display: block; box-sizing: border-box; min-height: 100vh; border-bottom: 2px solid #c8d3c8; background: linear-gradient(#dceadd, #bccabc); font: 30px/48px Inter, sans-serif; color: #212529; }
    .top { position: fixed; top: 0; left: 0; right: 0; z-index: 1; }
    .world { display: grid; grid-template-columns: 76% 24%; }
    .note { box-sizing: border-box; margin: 0 26px 0 0; padding-top: 82px; border: 4px solid #4d9e5e; border-top: 0; border-left-color: #244c2f; text-align: center; white-space: nowrap; }
    .years { display: flex; gap: 46px; }
    .charts { display: grid; grid-template-columns: 1150fr 780fr 1426fr; margin-top: 59px; }
    .title { margin: 12px 0 16px; border: 6px solid; border-color: #4d9e5e #244c2f #244c2f #4d9e5e; font-size: 59px; font-weight: 500; line-height: 76px; text-align: center; white-space: nowrap; }
    .text { margin: 0; border: 4px solid; border-color: #244c2f #4d9e5e #4d9e5e #244c2f; text-align: center; white-space: nowrap; }
  `;
  render() {
    return html`<nav-bar class="top"></nav-bar>
      <main>
        <section class="world">
          <world-map></world-map>
          <div><p class="note">gender you clicked on, you can do so by clicking the<br />reset buttons in the navigation bar.</p></div>
          <year-slider></year-slider>
          <div class="years"><span>Current years:</span><output>1965-2018</output></div>
        </section>
        <section class="charts">
          <donut-chart></donut-chart>
          <div>
            <h1 class="title">Explanation of the charts</h1>
            <p class="text">In the donutchart, you see how many female, male<br />and gender unknown artist contributed to works<br />acquired by MoMA. By default, you see all women,<br />men and unknown genders from all countries from all<br />categories in the years 1965-2018. You can click a<br />country to see the male/female/unknown gender<br />distribution for that country. You can also choose a<br />specific category and a different period of time by<br />using the time slider. The bubble chart shows how<br />many works of art a specific artist has made. You can<br />choose to click on the donutchart to see only<br />male/female/unknown gender artists. When the<br />bubblechart and the donutchart disappear, there is<br />no data available for the filters you've set. You can<br />alter your filters and if there is data available, the<br />charts will appear again.</p>
          </div>
          <bubble-chart></bubble-chart>
        </section>
      </main>`;
  }
}
